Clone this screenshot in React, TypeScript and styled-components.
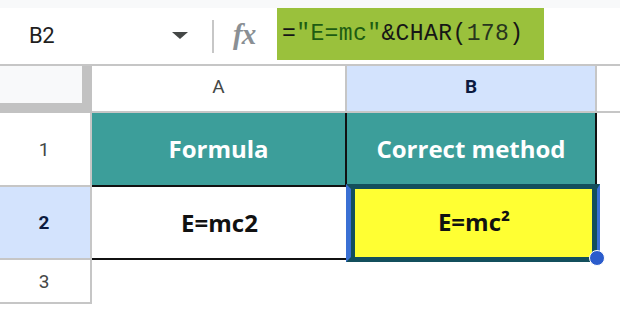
import React from 'react'
import styled, { createGlobalStyle } from 'styled-components'

const GlobalStyle = createGlobalStyle`
  html, body {
    margin: 0;
    padding: 0;
    background: #ffffff;
  }
  body {
    width: 620px;
    height: 309px;
    overflow: hidden;
    font-family: Roboto, "Liberation Sans", Arial, sans-serif;
  }
`

const Page = styled.div`
  width: 620px;
  height: 309px;
  display: flex;
  flex-direction: column;
`

const TopStrip = styled.div`
  height: 8px;
  background: #f8f9fa;
`

const FormulaBar = styled.div`
  height: 56px;
  display: flex;
  align-items: center;
  padding-left: 29px;
  border-bottom: 2px solid #c6c6c6;
  background: #ffffff;
`

const NameBox = styled.div`
  width: 159px;
  display: flex;
  align-items: center;
  justify-content: space-between;
  margin-top: -2px;
`

const NameText = styled.span`
  font-family: Roboto, "Liberation Sans", Arial, sans-serif;
  font-size: 22px;
  color: #1f1f1f;
  letter-spacing: -0.5px;
`

const Caret = styled.span`
  width: 0;
  height: 0;
  border-left: 8px solid transparent;
  border-right: 8px solid transparent;
  border-top: 7px solid #444746;
`

const Divider = styled.div`
  width: 2px;
  height: 33px;
  background: #c7c7c7;
  margin-left: 24px;
`

const Fx = styled.span`
  margin-left: 19px;
  width: 28px;
  font-family: "Liberation Serif", "DejaVu Serif", serif;
  font-style: italic;
  font-weight: 700;
  font-size: 29px;
  color: #8a8f94;
  letter-spacing: -1px;
  margin-top: -4px;
  white-space: nowrap;
`

const FormulaInput = styled.div`
  align-self: flex-start;
  margin-left: 16px;
  width: 267px;
  height: 52px;
  box-sizing: border-box;
  padding-left: 5px;
  display: flex;
  align-items: center;
  background: #9ac13c;
  font-family: "Liberation Mono", "DejaVu Sans Mono", monospace;
  font-size: 23px;
  letter-spacing: 0.4px;
  color: #1c1c1c;
  white-space: pre;
`

const Tok = styled.span<{ $kind?: 'str' | 'num' }>`
  color: ${p => (p.$kind === 'str' ? '#1d5c12' : p.$kind === 'num' ? '#27351e' : '#161616')};
`

const Grid = styled.div`
  display: grid;
  grid-template-columns: 92px 255px 250px 1fr;
  grid-template-rows: 47px 74px 73px 44px 1fr;
  flex: 1;
`

const Corner = styled.div`
  box-sizing: border-box;
  background: #f8f9fa;
  border-right: 10px solid #c2c2c2;
  border-bottom: 10px solid #c2c2c2;
`

const ColHeader = styled.div<{ $active?: boolean; $last?: boolean }>`
  box-sizing: border-box;
  display: flex;
  align-items: center;
  justify-content: center;
  padding-bottom: 5px;
  background: ${p => (p.$active ? '#d3e3fd' : '#ffffff')};
  border-bottom: 2px solid #c6c6c6;
  border-right: ${p => (p.$last ? 'none' : '2px solid #c6c6c6')};
  font-size: 19px;
  font-weight: ${p => (p.$active ? 700 : 400)};
  color: ${p => (p.$active ? '#0b1a3f' : '#444746')};
`

const RowHeader = styled.div<{ $active?: boolean }>`
  box-sizing: border-box;
  display: flex;
  align-items: center;
  justify-content: center;
  padding-right: 2px;
  background: ${p => (p.$active ? '#d3e3fd' : '#ffffff')};
  border-right: 2px solid #c6c6c6;
  border-bottom: 2px solid #c6c6c6;
  font-size: 19px;
  font-weight: ${p => (p.$active ? 700 : 400)};
  color: ${p => (p.$active ? '#0b1a3f' : '#444746')};
`

const TitleCell = styled.div`
  box-sizing: border-box;
  display: flex;
  align-items: center;
  justify-content: center;
  background: #3c9e9a;
  border-right: 2px solid #111111;
  border-bottom: 2px solid #111111;
  font-family: "Open Sans", "Noto Sans", sans-serif;
  font-weight: 700;
  font-size: 24px;
  color: #ffffff;
  padding-bottom: 2px;
`

const ValueCell = styled.div`
  box-sizing: border-box;
  display: flex;
  align-items: center;
  justify-content: center;
  background: #ffffff;
  border-bottom: 2px solid #111111;
  font-family: "Open Sans", "Noto Sans", sans-serif;
  font-weight: 700;
  font-size: 24px;
  color: #111111;
`

const SelectedCell = styled.div`
  position: relative;
  box-sizing: border-box;
  margin: -3px -3px -2px -1px;
  display: flex;
  align-items: center;
  justify-content: center;
  background: #ffff33;
  border-top: 5px solid #134f5c;
  border-bottom: 5px solid #134f5c;
  border-left: 5px solid #3a70d4;
  border-right: 3px solid #3a70d4;
  box-shadow: inset 4px 0 0 #134f5c, inset -5px 0 0 #134f5c;
  font-family: "Open Sans", "Noto Sans", sans-serif;
  font-weight: 700;
  font-size: 24px;
  color: #111111;
  padding-bottom: 4px;
`

const FillHandle = styled.span`
  position: absolute;
  right: -8px;
  bottom: -9px;
  width: 14px;
  height: 14px;
  border-radius: 50%;
  background: #2b5ccc;
  border: 1px solid #ffffff;
`

const Blank = styled.div`
  background: #ffffff;
`

export default function App() {
  return (
    <Page>
      <GlobalStyle />
      <TopStrip />
      <FormulaBar>
        <NameBox>
          <NameText>B2</NameText>
          <Caret />
        </NameBox>
        <Divider />
        <Fx>fx</Fx>
        <FormulaInput>
          <Tok>=</Tok>
          <Tok $kind="str">"E=mc"</Tok>
          <Tok>&amp;CHAR(</Tok>
          <Tok $kind="num">178</Tok>
          <Tok>)</Tok>
        </FormulaInput>
      </FormulaBar>
      <Grid>
        <Corner />
        <ColHeader>A</ColHeader>
        <ColHeader $active>B</ColHeader>
        <ColHeader $last />

        <RowHeader>1</RowHeader>
        <TitleCell>Formula</TitleCell>
        <TitleCell>Correct method</TitleCell>
        <Blank />

        <RowHeader $active>2</RowHeader>
        <ValueCell>E=mc2</ValueCell>
        <SelectedCell>
          E=mc²
          <FillHandle />
        </SelectedCell>
        <Blank />

        <RowHeader>3</RowHeader>
        <Blank />
        <Blank />
        <Blank />
      </Grid>
    </Page>
  )
}
